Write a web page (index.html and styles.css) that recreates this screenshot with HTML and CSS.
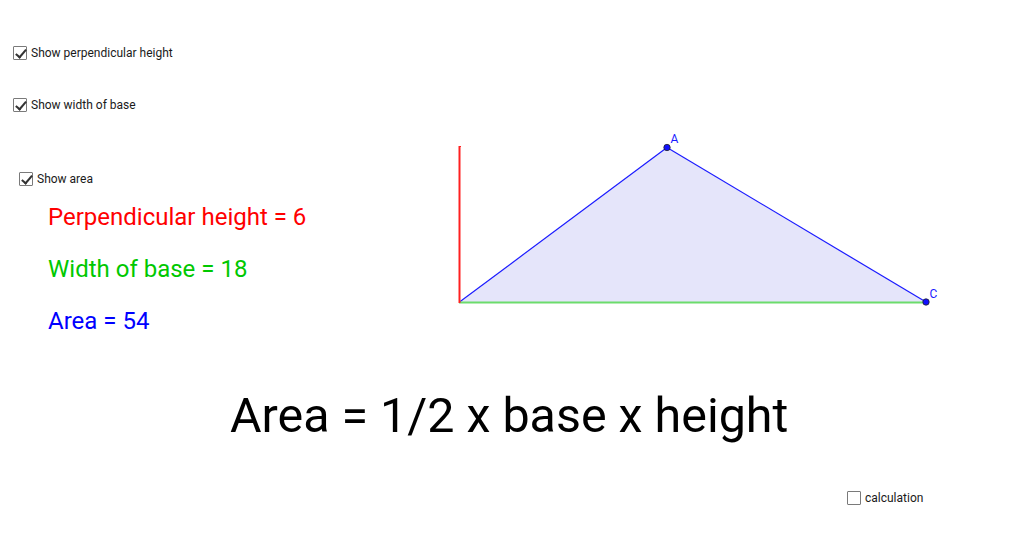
FILE: index.html
```html
<!DOCTYPE html>
<html>
<head>
<meta charset="utf-8">
<link rel="stylesheet" href="styles.css">
</head>
<body>
<div class="canvas">
  <svg class="drawing" width="1024" height="558" viewBox="0 0 1024 558" xmlns="http://www.w3.org/2000/svg">
    <polygon points="459.5,302 667,147.5 926,302" fill="#e5e5fa"/>
    <line x1="459.5" y1="302" x2="667" y2="147.5" stroke="#1a1aff" stroke-width="1.2"/>
    <line x1="667" y1="147.5" x2="926" y2="302" stroke="#1a1aff" stroke-width="1.2"/>
    <line x1="459" y1="302.5" x2="926" y2="302.5" stroke="#6cdc6c" stroke-width="2"/>
    <line x1="459.5" y1="146" x2="459.5" y2="303" stroke="#ff2020" stroke-width="2"/>
    <line x1="459.5" y1="146.5" x2="461" y2="146.5" stroke="#ff2020" stroke-width="1"/>
    <circle cx="667" cy="147.5" r="3.2" fill="#1010ff" stroke="#222" stroke-width="0.8"/>
    <circle cx="926" cy="302" r="3.2" fill="#1010ff" stroke="#222" stroke-width="0.8"/>
    <text x="670.5" y="143" class="ptlabel">A</text>
    <text x="929.5" y="297.5" class="ptlabel">C</text>
  </svg>

  <label class="cb cb-height"><span class="box checked"></span><span>Show perpendicular height</span></label>
  <label class="cb cb-width"><span class="box checked"></span><span>Show width of base</span></label>
  <label class="cb cb-area"><span class="box checked"></span><span>Show area</span></label>
  <label class="cb cb-calc"><span class="box"></span><span>calculation</span></label>

  <div class="value red v-height">Perpendicular height = 6</div>
  <div class="value green v-width">Width of base = 18</div>
  <div class="value blue v-area">Area = 54</div>

  <div class="formula">Area = 1/2 x base x height</div>
</div>
</body>
</html>
```

FILE: styles.css
```css
html, body {
  margin: 0;
  padding: 0;
  background: #ffffff;
  overflow: hidden;
}
.canvas {
  position: relative;
  width: 1024px;
  height: 558px;
  font-family: Roboto, "Liberation Sans", sans-serif;
  color: #000;
}
.drawing {
  position: absolute;
  left: 0;
  top: 0;
}
.ptlabel {
  font-family: Roboto, "Liberation Sans", sans-serif;
  font-size: 12px;
  fill: #1a1aff;
}
.cb {
  position: absolute;
  display: flex;
  align-items: center;
  gap: 4px;
  height: 14px;
  font-size: 12px;
  line-height: 14px;
  color: #1a1a1a;
}
.box {
  box-sizing: border-box;
  width: 14px;
  height: 14px;
  border: 1px solid #7a7a7a;
  border-radius: 1px;
  background: #fff;
  position: relative;
}
.box.checked::after {
  content: "";
  position: absolute;
  left: 4px;
  top: 0px;
  width: 4px;
  height: 9px;
  border-right: 2px solid #333;
  border-bottom: 2px solid #333;
  transform: rotate(40deg);
}
.cb-height { left: 13px; top: 46px; }
.cb-width { left: 13px; top: 98px; }
.cb-area { left: 19px; top: 172px; }
.cb-calc { left: 847px; top: 491px; }

.value {
  position: absolute;
  left: 48px;
  font-size: 24px;
  line-height: 28px;
  white-space: nowrap;
}
.red { color: #ff0000; }
.green { color: #00c800; }
.blue { color: #0000ff; }
.v-height { top: 203px; }
.v-width { top: 255px; }
.v-area { top: 307px; }

.formula {
  position: absolute;
  left: 230px;
  top: 388px;
  font-size: 48.4px;
  line-height: 56px;
  white-space: nowrap;
}
```
